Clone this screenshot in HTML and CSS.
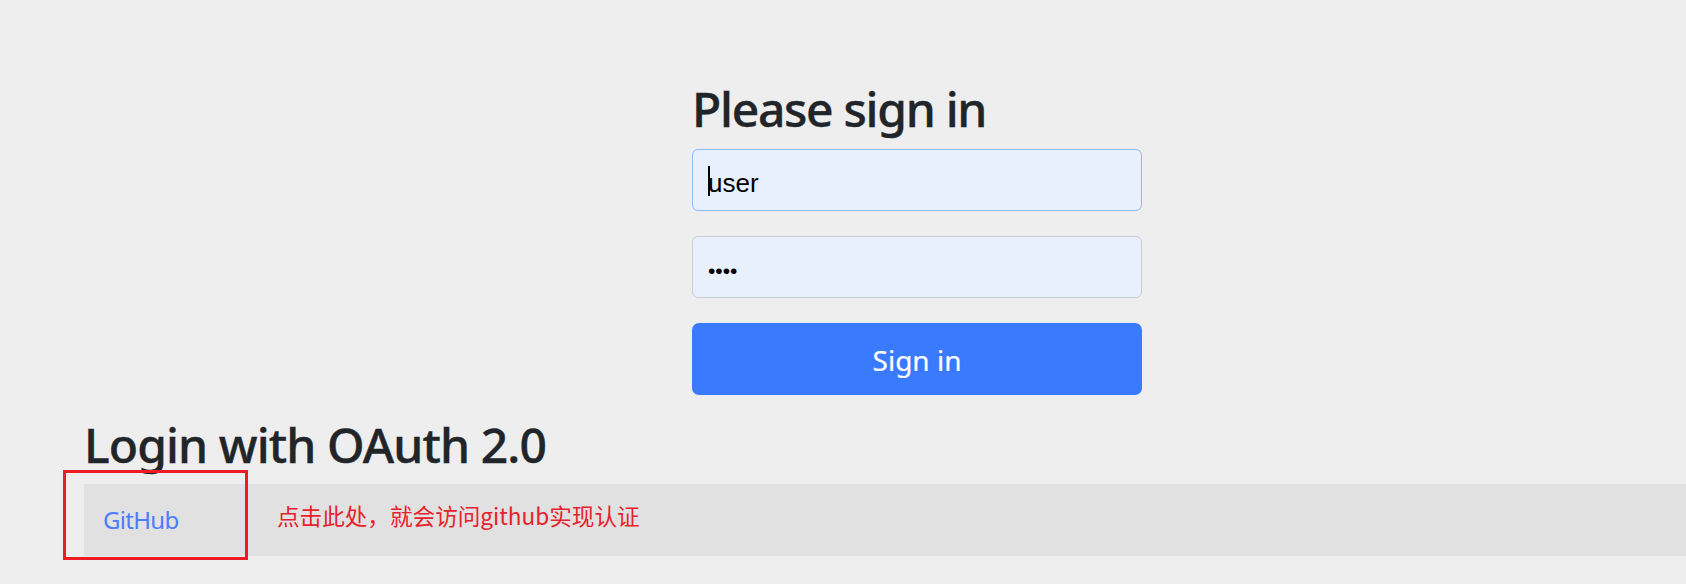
FILE: index.html
```html
<!DOCTYPE html>
<html lang="zh-CN">
<head>
<meta charset="utf-8">
<title>Please sign in</title>
<link rel="stylesheet" href="styles.css">
</head>
<body>
<div class="page">
  <form class="signin">
    <h2 class="heading">Please sign in</h2>
    <div class="field">
      <input class="control control-focus" type="text" value="user" aria-label="Username">
      <span class="caret"></span>
    </div>
    <div class="field">
      <input class="control control-pass" type="password" value="pass" aria-label="Password">
    </div>
    <button class="btn" type="button">Sign in</button>
  </form>
  <h2 class="heading heading-oauth">Login with OAuth 2.0</h2>
  <div class="row">
    <div class="cell"><a class="link" href="#">GitHub</a></div>
    <span class="note">点击此处，就会访问github实现认证</span>
    <span class="mark"></span>
  </div>
</div>
</body>
</html>
```
FILE: styles.css
```css
* { box-sizing: border-box; }
html, body { margin: 0; padding: 0; }
body {
  background: #eeeeee;
  width: 1686px;
  height: 584px;
  overflow: hidden;
  font-family: "Noto Sans", "Open Sans", sans-serif;
  color: #212529;
}
.page {
  padding: 80px 0 0 84px;
  position: relative;
}
.signin {
  margin-left: 608px;
  width: 450px;
  display: flex;
  flex-direction: column;
}
.heading {
  margin: 0;
  font-size: 48px;
  line-height: 58px;
  font-weight: 500;
  letter-spacing: -1.3px;
  -webkit-text-stroke: 0.4px #212529;
  color: #212529;
}
.signin .heading { margin-bottom: 11px; }
.field {
  position: relative;
  margin-bottom: 25px;
}
.control {
  display: block;
  width: 100%;
  height: 62px;
  margin: 0;
  padding: 7px 15px 0;
  border: 1px solid #c9ccd1;
  border-radius: 6px;
  background: #e8f0fe;
  font-family: "Liberation Sans", Arial, sans-serif;
  font-size: 26px;
  color: #000;
  outline: none;
  caret-color: transparent;
}
.control-focus { border-color: #8ebaf6; }
.control-pass { font-size: 21px; letter-spacing: 0; padding-top: 8px; }
.caret {
  position: absolute;
  left: 16px;
  top: 17px;
  width: 2px;
  height: 30px;
  background: #000;
}
.btn {
  display: block;
  width: 100%;
  height: 72px;
  margin: 0;
  border: 0;
  border-radius: 7px;
  background: #3a7afe;
  color: #fff;
  font-family: "Noto Sans", "Open Sans", sans-serif;
  font-size: 28px;
  line-height: 1;
  padding: 1px 0 0;
  -webkit-text-stroke: 0.2px #fff;
}
.heading-oauth { margin-top: 21px; letter-spacing: -0.9px; }
.row {
  margin-top: 10px;
  height: 72px;
  background: #e1e1e1;
  display: flex;
  align-items: center;
  position: relative;
}
.cell {
  padding: 18px 19px;
  font-size: 24px;
  line-height: 36px;
  width: 164px;
}
.link {
  color: #4c7dff;
  text-decoration: none;
  letter-spacing: -0.7px;
}
.note {
  margin-left: 29px;
  margin-top: -9px;
  font-family: "Noto Sans CJK SC", "Noto Sans", sans-serif;
  font-size: 22.6px;
  color: #e8222c;
}
.mark {
  position: absolute;
  left: -21px;
  top: -14px;
  width: 185px;
  height: 90px;
  border: 3px solid #ed1c24;
}
```
